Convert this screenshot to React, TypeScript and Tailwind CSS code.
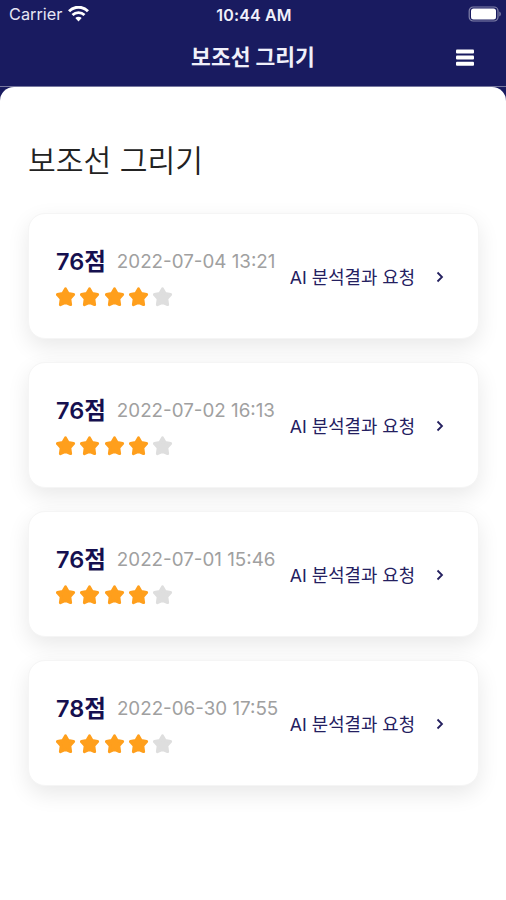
import React from 'react'
import clsx from 'clsx'

type Result = {
  id: number
  score: number
  createdAt: string
  stars: number
}

const MAX_STARS = 5

const results: Result[] = [
  { id: 1, score: 76, createdAt: '2022-07-04 13:21', stars: 4 },
  { id: 2, score: 76, createdAt: '2022-07-02 16:13', stars: 4 },
  { id: 3, score: 76, createdAt: '2022-07-01 15:46', stars: 4 },
  { id: 4, score: 78, createdAt: '2022-06-30 17:55', stars: 4 },
]

const WifiIcon = () => (
  <svg width="21" height="16" viewBox="0 0 21 16" fill="none">
    <path
      d="M1 5.300C6.200 -.1 14.800 -.1 20 5.300"
      stroke="currentColor"
      strokeWidth="3"
    />
    <path
      d="M4.500 9c3.400-3.300 8.600-3.300 12 0"
      stroke="currentColor"
      strokeWidth="2.800"
    />
    <path
      d="M7.300 12.100c1.900-1.900 4.500-1.900 6.400 0L10.500 15.500z"
      fill="currentColor"
    />
  </svg>
)

const BatteryIcon = () => (
  <svg width="34" height="16" viewBox="0 0 34 16" fill="none">
    <rect
      x="1.200"
      y="1"
      width="28.800"
      height="14"
      rx="4"
      stroke="#8384ab"
      strokeWidth="1.200"
    />
    <rect x="3" y="2.500" width="25" height="11" rx="2.500" fill="#fff" />
    <path d="M31.300 5.500c2 .8 2 4.200 0 5z" fill="#8384ab" />
  </svg>
)

const MenuIcon = () => (
  <svg width="18" height="17" viewBox="0 0 18 17" fill="currentColor">
    <rect y="0.500" width="18" height="4" rx="1" />
    <rect y="6.600" width="18" height="4" rx="1" />
    <rect y="12.700" width="18" height="4" rx="1" />
  </svg>
)

const StarIcon = ({ active }: { active: boolean }) => (
  <svg
    width="20"
    height="20"
    viewBox="0 0 20 20"
    className={clsx(active ? 'text-[#ff9f1c]' : 'text-[#dedede]')}
  >
    <path
      d="M9.500 1.900l2.600 4.700 5.500 1-3.800 4.100.8 5.900-5.100-2.300-5.100 2.300.8-5.900-3.800-4.100 5.500-1z"
      fill="currentColor"
      stroke="currentColor"
      strokeWidth="3"
      strokeLinejoin="round"
    />
  </svg>
)

const ChevronIcon = () => (
  <svg width="8" height="12" viewBox="0 0 8 12" fill="none">
    <path
      d="M1.500 1.500L6 6l-4.500 4.500"
      stroke="currentColor"
      strokeWidth="1.800"
    />
  </svg>
)

const StatusBar = () => (
  <div className="grid grid-cols-[1fr_auto_1fr] items-center h-7 pl-[9px] pr-[7px]">
    <div className="flex items-center gap-[6px] text-[16.300px] text-[#e6e6f4]">
      <span>Carrier</span>
      <span className="text-white">
        <WifiIcon />
      </span>
    </div>
    <span className="pt-px text-center text-base font-semibold tracking-[0.15px] text-[#f0f0fa] whitespace-nowrap">
      10:44 AM
    </span>
    <div className="flex justify-end -mr-[3px]">
      <BatteryIcon />
    </div>
  </div>
)

const ResultCard: React.FC<{ result: Result }> = ({ result }) => (
  <li className="flex items-center justify-between h-[126px] pt-[3px] pl-[27px] pr-[34px] rounded-[17px] bg-white border border-[#f5f5f5] shadow-[0_8px_22px_rgba(0,0,0,0.09)]">
    <div>
      <div className="flex items-center gap-[11px] h-7 whitespace-nowrap">
        <strong className="text-[23.500px] font-semibold text-[#15104f]">
          {result.score}점
        </strong>
        <span className="pt-px text-[18.800px] text-[#a0a0a0]">
          {result.createdAt}
        </span>
      </div>
      <div className="flex gap-[4.300px] mt-[11px]">
        {Array.from({ length: MAX_STARS }, (_, i) => (
          <StarIcon key={i} active={i < result.stars} />
        ))}
      </div>
    </div>
    <button
      type="button"
      className="flex items-center gap-[21px] text-[17.800px] text-[#24205f] whitespace-nowrap"
    >
      <span className="pt-0.5">AI 분석결과 요청</span>
      <ChevronIcon />
    </button>
  </li>
)

const App = () => (
  <div className="h-[900px] w-[506px] overflow-hidden bg-[#191b60] font-['Inter','Noto_Sans_CJK_KR',sans-serif]">
    <header className="h-[87px] text-white border-b border-[#77789f]">
      <StatusBar />
      <div className="grid grid-cols-[1fr_auto_1fr] items-center h-[58px] px-8">
        <h1 className="col-start-2 text-[21.500px] font-bold text-[#f0f0fa]">
          보조선 그리기
        </h1>
        <button type="button" aria-label="menu" className="justify-self-end">
          <MenuIcon />
        </button>
      </div>
    </header>
    <main className="h-[813px] px-7 pt-[51px] rounded-t-[14px] bg-white">
      <h2 className="text-[30.200px] leading-[46px] font-[350] text-[#222]">
        보조선 그리기
      </h2>
      <ul className="flex flex-col gap-[23.100px] mt-[28.500px] mr-[-1px]">
        {results.map((result) => (
          <ResultCard key={result.id} result={result} />
        ))}
      </ul>
    </main>
  </div>
)

export default App
